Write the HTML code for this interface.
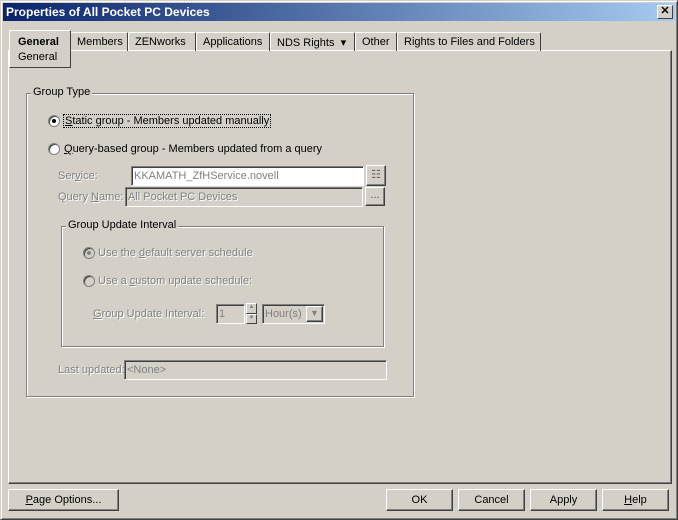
<!DOCTYPE html>
<html><head><style>
*{box-sizing:border-box;margin:0;padding:0}
body{width:678px;height:520px;background:#d4d0c8;font-family:"Liberation Sans",sans-serif;font-size:11px;color:#000;position:relative;overflow:hidden}
.a{position:absolute;white-space:nowrap}
.win{left:0;top:0;width:678px;height:520px;border:1px solid;border-color:#d4d0c8 #404040 #404040 #d4d0c8;box-shadow:inset 1px 1px #fff,inset -1px -1px #808080}
.title{left:3px;top:3px;width:672px;height:18px;background:linear-gradient(90deg,#0a246a,#a6caf0);color:#fff;font-weight:bold;font-size:12px;padding:2px 3px}
.xb{left:657px;top:5px;width:16px;height:14px;background:#d4d0c8;border:1px solid;border-color:#fff #404040 #404040 #fff;font-size:11px;text-align:center;line-height:11px;font-weight:bold;color:#000}
.tab{top:32px;height:19px;border:1px solid;border-color:#fff #404040 transparent #fff;border-bottom:none;padding:3px 6px 0;border-radius:2px 2px 0 0}
.panel{left:8px;top:50px;width:664px;height:434px;border:1px solid;border-color:#fff #404040 #404040 #fff;box-shadow:inset -1px -1px #808080}
.grp{border:1px solid #808080;box-shadow:1px 1px #fff,inset 1px 1px #fff}
.lg{background:#d4d0c8;padding:0 2px}
.inp{border:1px solid;border-color:#808080 #fff #fff #808080;box-shadow:inset 1px 1px #404040;padding:3px 2px 0;height:20px}
.btn{height:22px;border:1px solid;border-color:#fff #404040 #404040 #fff;box-shadow:inset -1px -1px #808080;text-align:center;line-height:20px}
.dis{color:#808080;text-shadow:1px 1px #fff}
.rad{width:12px;height:12px;border-radius:50%;background:#fff;border:1px solid #808080;box-shadow:inset 1px 1px #404040}
.rad.on::after{content:"";position:absolute;left:3px;top:3px;width:4px;height:4px;border-radius:50%;background:#000}
.rad.dd{background:#d4d0c8}
.rad.dd.on::after{background:#808080}
u{text-decoration:underline}
</style></head><body>
<div class="a win"></div>
<div class="a title">Properties of All Pocket PC Devices</div>
<div class="a xb">✕</div>

<div class="a panel"></div>
<div class="a tab" style="left:70px;width:58px">Members</div>
<div class="a tab" style="left:128px;width:68px">ZENworks</div>
<div class="a tab" style="left:196px;width:74px">Applications</div>
<div class="a tab" style="left:270px;width:85px">NDS Rights &nbsp;▾</div>
<div class="a tab" style="left:355px;width:42px">Other</div>
<div class="a tab" style="left:397px;width:144px">Rights to Files and Folders</div>
<div class="a" style="left:9px;top:30px;width:62px;height:38px;background:#d4d0c8;border:1px solid;border-color:#fff #404040 #404040 #fff;border-radius:2px 2px 0 0;padding:4px 0 0 8px;line-height:15px"><b>General</b><br>General</div>

<div class="a grp" style="left:26px;top:93px;width:388px;height:304px"></div>
<div class="a lg" style="left:31px;top:86px">Group Type</div>
<div class="a rad on" style="left:48px;top:115px"></div>
<div class="a" style="left:63px;top:114px;border:1px dotted #000;padding:0 1px"><u>S</u>tatic group - Members updated manually</div>
<div class="a rad" style="left:48px;top:143px"></div>
<div class="a" style="left:64px;top:143px"><u>Q</u>uery-based group - Members updated from a query</div>

<div class="a dis" style="left:58px;top:170px">Ser<u>v</u>ice:</div>
<div class="a inp" style="left:131px;top:166px;width:233px;background:#fff;color:#808080">KKAMATH_ZfHService.novell</div>
<div class="a btn" style="left:366px;top:165px;width:20px;height:21px;color:#666;line-height:18px">☷</div>
<div class="a dis" style="left:58px;top:191px">Query <u>N</u>ame:</div>
<div class="a inp dis" style="left:125px;top:187px;width:238px">All Pocket PC Devices</div>
<div class="a btn" style="left:365px;top:187px;width:20px;height:19px;line-height:14px;color:#555">...</div>

<div class="a grp" style="left:61px;top:226px;width:323px;height:121px"></div>
<div class="a lg" style="left:66px;top:219px">Group Update Interval</div>
<div class="a rad dd on" style="left:83px;top:247px"></div>
<div class="a dis" style="left:98px;top:247px">Use the <u>d</u>efault server schedule</div>
<div class="a rad dd" style="left:83px;top:275px"></div>
<div class="a dis" style="left:98px;top:275px">Use a <u>c</u>ustom update schedule:</div>
<div class="a dis" style="left:93px;top:308px"><u>G</u>roup Update Interval:</div>
<div class="a inp dis" style="left:216px;top:304px;width:29px;text-shadow:none">1</div>
<div class="a" style="left:246px;top:303px;width:11px;height:11px;border:1px solid;border-color:#fff #404040 #404040 #fff;font-size:6px;text-align:center;color:#808080">▲</div>
<div class="a" style="left:246px;top:314px;width:11px;height:10px;border:1px solid;border-color:#fff #404040 #404040 #fff;font-size:6px;text-align:center;color:#808080">▼</div>
<div class="a inp dis" style="left:262px;top:304px;width:63px;text-shadow:none">Hour(s)</div>
<div class="a btn" style="left:306px;top:306px;width:17px;height:16px;line-height:12px;color:#808080;font-size:9px">▼</div>

<div class="a dis" style="left:58px;top:364px">Last updated:</div>
<div class="a inp dis" style="left:124px;top:360px;width:263px;text-shadow:none">&lt;None&gt;</div>

<div class="a btn" style="left:8px;top:489px;width:111px"><u>P</u>age Options...</div>
<div class="a btn" style="left:386px;top:489px;width:67px">OK</div>
<div class="a btn" style="left:458px;top:489px;width:67px">Cancel</div>
<div class="a btn" style="left:530px;top:489px;width:67px">Apply</div>
<div class="a btn" style="left:602px;top:489px;width:67px"><u>H</u>elp</div>
</body></html>
